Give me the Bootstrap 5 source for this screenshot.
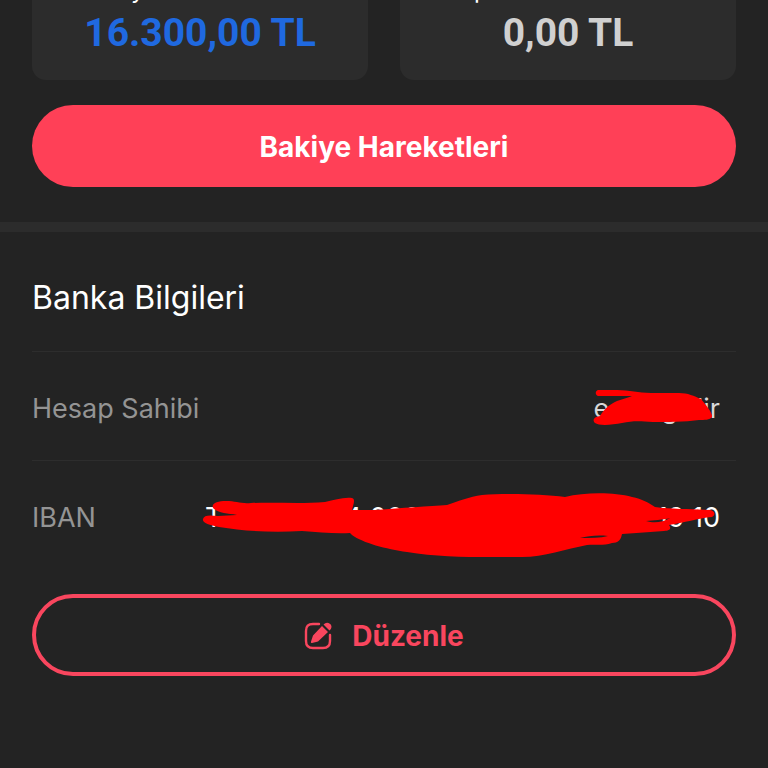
<!DOCTYPE html>
<html lang="tr">
<head>
<meta charset="utf-8">
<meta name="viewport" content="width=device-width, initial-scale=1">
<title>Banka Bilgileri</title>
<link href="https://cdn.jsdelivr.net/npm/bootstrap@5.3.0/dist/css/bootstrap.min.css" rel="stylesheet">
<style>
  body { background: #232323; color: #fff; font-family: Inter, "Liberation Sans", sans-serif; min-height: 100vh; }
  .page { padding: 0 32px; }
  .balances { height: 80px; gap: 32px; }
  .balance { background: #2c2c2c; border-radius: 0 0 14px 14px; padding-bottom: 23px; }
  .balance-label { font-size: 24px; line-height: 28px; margin-bottom: 5px; }
  .label-wide { padding-left: 99px; }
  .label-narrow { padding-left: 74px; }
  .amount { font-family: Roboto, "Liberation Sans", sans-serif; font-size: 39px; line-height: 48px; }
  .amount-blue { color: #1f69e0; }
  .amount-grey { color: #d0d0d0; }
  .pill { height: 82px; font-size: 28px; border-radius: 41px; }
  .pill-solid, .pill-solid:hover { background: #ff4057; color: #fff; border: 0; margin-top: 25px; padding-top: 8px; }
  .pill-line, .pill-line:hover { color: #f9465e; border: 4px solid #f9465e; margin-top: 25px; gap: 20px; padding-top: 8px; }
  .band { height: 10px; background: #2c2c2c; margin-top: 35px; }
  .section-title { font-size: 32px; line-height: 36px; padding: 48px 0 35px; }
  .info-row { border-top: 1px solid #2d2d2d; height: 109px; font-size: 27px; padding-right: 16px; padding-top: 6px; }
  .info-label { color: #949494; }
  .info-owner { color: #d8d8d8; }
  .gap-a { margin-right: 52px; }
  .gap-b { margin-right: 9px; }
  .gap-c { margin-right: 122px; }
  .gap-d { margin-right: 236px; }
  .scribble { top: 0; right: 0; height: 108px; fill: #f00; }
</style>
</head>
<body>
<main>
  <div class="page">
    <section class="balances d-flex overflow-hidden">
      <div class="balance d-flex flex-column justify-content-end w-100">
        <div class="balance-label label-wide">y</div>
        <div class="amount amount-blue fw-bold text-center">16.300,00 TL</div>
      </div>
      <div class="balance d-flex flex-column justify-content-end w-100">
        <div class="balance-label label-narrow">p</div>
        <div class="amount amount-grey fw-bold text-center">0,00 TL</div>
      </div>
    </section>
    <button type="button" class="btn pill pill-solid w-100 fw-bold">Bakiye Hareketleri</button>
  </div>

  <div class="band"></div>

  <section class="page">
    <h2 class="section-title m-0 fw-normal">Banka Bilgileri</h2>
    <div class="info-row position-relative d-flex justify-content-between align-items-center">
      <span class="info-label">Hesap Sahibi</span>
      <span class="info-owner d-flex"><span class="gap-a">e</span><span class="gap-b">g</span><span>dir</span></span>
      <svg class="scribble position-absolute" width="160" viewBox="576 352 160 108" aria-hidden="true">
        <path d="M598 390H617C630 390 638 393 651 393H679C688 393 694 396 701 399C705 404 713 413 712 417C710 420 704 420 699 420C684 422 668 422 653 422C638 421 632 421 622 423C612 425 599 426 595 423C592 420 594 417 600 416C604 409 610 404 617 401C622 399 628 398 632 396H598C595 395 595 391 598 390Z"/>
      </svg>
    </div>
    <div class="info-row position-relative d-flex justify-content-between align-items-center">
      <span class="info-label">IBAN</span>
      <span class="d-flex"><span class="gap-c">T</span><span class="gap-d">4 000</span><span>19 10</span></span>
      <svg class="scribble position-absolute" width="540" viewBox="196 461 540 108" aria-hidden="true">
        <path fill-rule="evenodd" d="M213 508C211 503 218 501 226 501C236 501 241 504 251 503C276 502 300 504 325 502C335 500 343 497 352 498C356 499 353 505 352 510H376C401 508 430 506 447 505C459 501 469 497 482 495C505 493 542 494 565 497C585 492 614 492 632 497C642 499 649 503 655 507C670 509 690 509 710 510C715 511 716 515 712 517C698 518 684 523 669 525C672 529 669 531 664 531C650 532 637 533 622 534C621 540 618 543 612 543C603 546 595 544 587 545C566 549 544 557 522 557C480 557 443 558 407 552C386 549 363 543 352 535L350 533C334 534 319 532 302 531C271 533 244 531 219 527C209 525 202 523 203 519C204 515 209 515 218 516L237 515C228 513 219 514 213 508ZM580 538C591 538 600 538 608 536C597 535 588 536 580 538ZM646 521C653 520 663 520 670 518C662 523 653 523 646 521Z"/>
      </svg>
    </div>
    <button type="button" class="btn pill pill-line w-100 fw-bold d-flex justify-content-center align-items-center">
      <svg width="28" height="28" viewBox="0 0 28 28" aria-hidden="true">
        <path d="M15 2H9Q2 2 2 9V19Q2 26 9 26H19Q26 26 26 19V13" fill="none" stroke="currentColor" stroke-width="2.4" stroke-linecap="round"/>
        <path d="M18 4L24 10L14 19.500L8 21Q6.500 21.200 7 19.500L9 13.500ZM19.500 2.500Q22 0 24.500 1Q27.500 2 27.500 5Q27.300 7 25.500 8.500Z" fill="currentColor"/>
      </svg>
      <span>Düzenle</span>
    </button>
  </section>
</main>
<script src="https://cdn.jsdelivr.net/npm/bootstrap@5.3.0/dist/js/bootstrap.bundle.min.js"></script>
</body>
</html>
